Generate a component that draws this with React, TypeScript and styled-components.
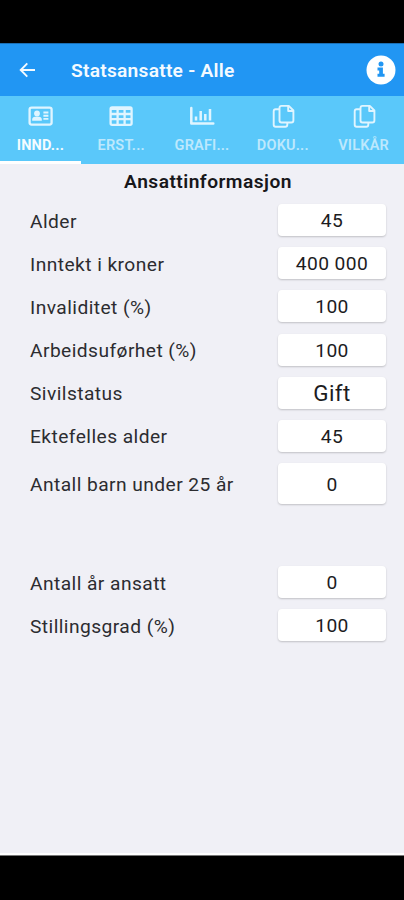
import React from "react";
import styled, { createGlobalStyle } from "styled-components";

const Global = createGlobalStyle`
  * { box-sizing: border-box; }
  body { margin: 0; background: #000; font-family: Roboto, "Liberation Sans", sans-serif; }
`;

const Screen = styled.div`
  width: 404px;
  height: 900px;
  padding: 43px 0 45px;
  display: flex;
  flex-direction: column;
  background: #000;
  overflow: hidden;
`;

const Header = styled.header`
  height: 53px;
  flex: none;
  display: flex;
  align-items: center;
  padding: 0 8px 1px 19px;
  background: #2196f3;
  border-top: 1px solid #1a6fb5;
  color: #f4faff;
`;

const Title = styled.h1`
  flex: 1;
  margin: 2px 0 0 35px;
  font-size: 19.2px;
  font-weight: 600;
  line-height: 24px;
  letter-spacing: 0.25px;
`;

const Tabs = styled.nav`
  height: 68px;
  flex: none;
  display: grid;
  grid-template-columns: repeat(5, 1fr);
  background: #5ac8fa;
`;

const Tab = styled.div<{ $active?: boolean }>`
  display: flex;
  flex-direction: column;
  align-items: center;
  padding-top: 7px;
  color: ${(p) => (p.$active ? "#f4fcff" : "#bde8fd")};
  border-bottom: ${(p) => (p.$active ? "3px solid #fff" : "0")};

  svg { width: 26px; height: 26px; color: #e0f5ff; }
`;

const TabLabel = styled.span<{ $active?: boolean }>`
  margin-top: 8px;
  font-size: 14.5px;
  font-weight: ${(p) => (p.$active ? 700 : 600)};
  line-height: 18px;
  letter-spacing: 0.2px;
`;

const Form = styled.main`
  flex: 1;
  background: #f0f0f6;
  border-bottom: 2px solid #fff;
  box-shadow: 0 1px 0 #777;
`;

const Heading = styled.h2`
  margin: 0 0 10px;
  padding: 6px 0 0 12px;
  height: 30px;
  text-align: center;
  font-size: 19.2px;
  line-height: 24px;
  letter-spacing: 0.46px;
  font-weight: 640;
  color: #17171a;
`;

const Row = styled.label<{ $tall?: boolean; $spaced?: boolean }>`
  display: flex;
  align-items: center;
  justify-content: space-between;
  height: ${(p) => (p.$tall ? 41 : 32)}px;
  margin: 0 18px ${(p) => (p.$spaced ? 62 : 11.2)}px 30px;
  font-size: 19.2px;
  letter-spacing: 0.44px;
  color: #2c2c30;
`;

const Caption = styled.span`
  padding-top: 2px;
`;

const Field = styled.span<{ $large?: boolean }>`
  width: 108px;
  height: 100%;
  padding-top: 1px;
  display: flex;
  align-items: center;
  justify-content: center;
  border-radius: 4px;
  background: #fff;
  box-shadow: 0 1px 2px rgba(0, 0, 0, 0.2);
  color: #1c1c1e;
  font-size: ${(p) => (p.$large ? 22.4 : 19.2)}px;
`;

const BackIcon = () => (
  <svg width="17" height="16" viewBox="0 0 17 16" fill="none" stroke="currentColor" strokeWidth="1.9">
    <path d="M16 8H2M8.3 1.3 1.7 8l6.6 6.7" />
  </svg>
);

const InfoIcon = () => (
  <svg width="30" height="30" viewBox="0 0 30 30">
    <circle cx="15" cy="15" r="14.5" fill="#fff" />
    <circle cx="15" cy="9" r="2.5" fill="#2196f3" />
    <path d="M11.5 12.5h5.4v6.3h1.7v2.9h-7.1v-2.9h1.7v-3.4h-1.7z" fill="#2196f3" />
  </svg>
);

const CardIcon = () => (
  <svg viewBox="0 0 26 26" fill="none" stroke="currentColor" strokeWidth="2.3">
    <rect x="2.6" y="4.6" width="22" height="17" rx="2" />
    <g fill="currentColor" stroke="none">
      <circle cx="10" cy="10.5" r="2.9" />
      <path d="M5.2 17.8v-1.2c0-1.8 1.2-2.8 2.8-2.8h4c1.6 0 2.8 1 2.8 2.8v1.2z" />
    </g>
    <path d="M16.4 9.5h5M16.4 12.7h5M16.4 15.9h5" strokeWidth="1.9" />
  </svg>
);

const TableIcon = () => (
  <svg viewBox="0 0 26 26" fill="none" stroke="currentColor" strokeWidth="2.3">
    <rect x="2.6" y="4.4" width="21" height="17.4" rx="1.5" />
    <path d="M3 5.8h20.5M3 11h20.5M3 16.2h20.5M9.6 5v16.5M16.6 5v16.5" />
  </svg>
);

const ChartIcon = () => (
  <svg viewBox="0 0 26 26" fill="none" stroke="currentColor" strokeWidth="2.5" strokeLinecap="round" strokeLinejoin="round">
    <path d="M2.3 5v15.4H24.3" />
    <path d="M7 17.5v-4M11.7 17.5V8M16.3 17.5v-6.5M21 17.5V6" strokeLinecap="butt" />
  </svg>
);

const CopyIcon = () => (
  <svg viewBox="0 0 26 26" fill="none" stroke="currentColor" strokeWidth="1.9" strokeLinejoin="round">
    <path d="M11.5 2.9h7.3l4.6 4.6v10a2 2 0 0 1-2 2h-9.9a2 2 0 0 1-2-2V4.9a2 2 0 0 1 2-2z" />
    <path d="M18.2 3v5h5" />
    <path d="M9.3 6.3H5.7a2 2 0 0 0-2 2v13.4a2 2 0 0 0 2 2h9.6a2 2 0 0 0 2-2v-2" />
  </svg>
);

const tabs = [
  { label: "INND...", icon: <CardIcon />, active: true },
  { label: "ERST...", icon: <TableIcon /> },
  { label: "GRAFI...", icon: <ChartIcon /> },
  { label: "DOKU...", icon: <CopyIcon /> },
  { label: "VILKÅR", icon: <CopyIcon /> },
];

const rows = [
  { label: "Alder", value: "45" },
  { label: "Inntekt i kroner", value: "400 000" },
  { label: "Invaliditet (%)", value: "100" },
  { label: "Arbeidsuførhet (%)", value: "100" },
  { label: "Sivilstatus", value: "Gift", large: true },
  { label: "Ektefelles alder", value: "45" },
  { label: "Antall barn under 25 år", value: "0", tall: true, spaced: true },
  { label: "Antall år ansatt", value: "0" },
  { label: "Stillingsgrad (%)", value: "100" },
];

export default function App() {
  return (
    <>
      <Global />
      <Screen>
        <Header>
          <BackIcon />
          <Title>Statsansatte - Alle</Title>
          <InfoIcon />
        </Header>
        <Tabs>
          {tabs.map((t) => (
            <Tab key={t.label} $active={t.active}>
              {t.icon}
              <TabLabel $active={t.active}>{t.label}</TabLabel>
            </Tab>
          ))}
        </Tabs>
        <Form>
          <Heading>Ansattinformasjon</Heading>
          {rows.map((r) => (
            <Row key={r.label} $tall={r.tall} $spaced={r.spaced}>
              <Caption>{r.label}</Caption>
              <Field $large={r.large}>{r.value}</Field>
            </Row>
          ))}
        </Form>
      </Screen>
    </>
  );
}
